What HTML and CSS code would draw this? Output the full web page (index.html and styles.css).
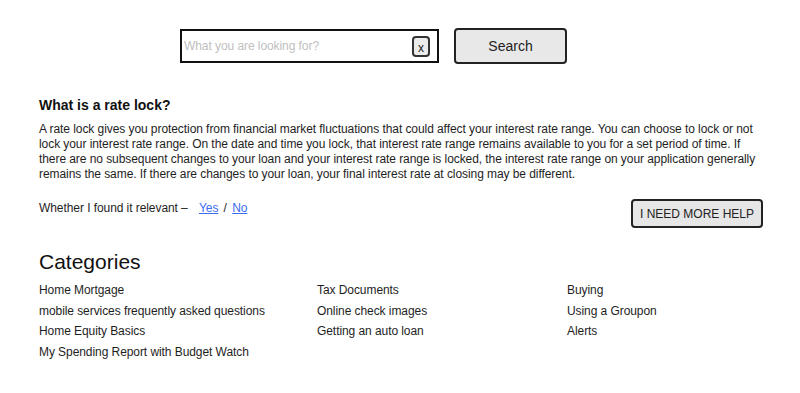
FILE: index.html
```html
<!DOCTYPE html>
<html lang="en">
<head>
    <meta charset="UTF-8">
    <meta name="viewport" content="width=device-width, initial-scale=1.0">
    <title>Help - Rate lock</title>
    <link rel="stylesheet" href="styles.css">
</head>
<body>
    <div class="search-bar">
        <div class="search-box">
            <input type="text" class="search-input" placeholder="What you are looking for?">
            <button class="clear-btn">x</button>
        </div>
        <button class="search-btn">Search</button>
    </div>

    <div class="article">
        <h2 class="article-title">What is a rate lock?</h2>
        <p class="article-text">A rate lock gives you protection from financial market fluctuations that could affect your interest rate range. You can choose to lock or not lock your interest rate range. On the date and time you lock, that interest rate range remains available to you for a set period of time. If there are no subsequent changes to your loan and your interest rate range is locked, the interest rate range on your application generally remains the same. If there are changes to your loan, your final interest rate at closing may be different.</p>

        <div class="feedback-row">
            <div class="feedback">
                Whether I found it relevant &ndash;
                <a href="#" class="feedback-link">Yes</a> / <a href="#" class="feedback-link">No</a>
            </div>
            <button class="help-btn">I NEED MORE HELP</button>
        </div>
    </div>

    <div class="categories">
        <h2 class="categories-title">Categories</h2>
        <ul class="category-list">
            <li>Home Mortgage</li>
            <li>Tax Documents</li>
            <li>Buying</li>
            <li>mobile services frequently asked questions</li>
            <li>Online check images</li>
            <li>Using a Groupon</li>
            <li>Home Equity Basics</li>
            <li>Getting an auto loan</li>
            <li>Alerts</li>
            <li>My Spending Report with Budget Watch</li>
        </ul>
    </div>
</body>
</html>
```

FILE: styles.css
```css
body {
    font-family: 'Liberation Sans', Arial, sans-serif;
    margin: 0;
    padding: 0 36px 0 39px;
    color: #1e1e1e;
    background: #fff;
    font-size: 12px;
    letter-spacing: -0.07px;
}

/* Search */
.search-bar {
    display: flex;
    align-items: center;
    gap: 15px;
    padding: 28px 0 0 141px;
}
.search-box {
    display: flex;
    align-items: center;
    box-sizing: border-box;
    width: 259px;
    height: 34px;
    border: 2px solid #111;
    padding: 0 7px 0 2px;
}
.search-input {
    flex: 1;
    min-width: 0;
    border: none;
    outline: none;
    font-family: inherit;
    font-size: 12px;
    letter-spacing: -0.07px;
    padding: 0;
    color: #222;
}
.search-input::placeholder {
    color: #c0c0c0;
}
.clear-btn {
    box-sizing: border-box;
    width: 18px;
    height: 21px;
    padding: 0;
    border: 2px solid #333;
    border-radius: 4px;
    background: #ececec;
    font-family: inherit;
    font-size: 12px;
    line-height: 17px;
    padding-top: 2px;
    color: #222;
}
.search-btn {
    box-sizing: border-box;
    width: 113px;
    height: 36px;
    border: 2px solid #222;
    border-radius: 4px;
    background: #e8e8e8;
    font-family: inherit;
    font-size: 14px;
    color: #222;
}

/* Article */
.article-title {
    font-size: 14px;
    font-weight: bold;
    margin: 33px 0 0;
    color: #111;
    letter-spacing: 0;
}
.article-text {
    margin: 9px 0 0;
    line-height: 15px;
}
.feedback-row {
    display: flex;
    justify-content: space-between;
    align-items: flex-start;
    margin-top: 17px;
}
.feedback {
    line-height: 15px;
    padding-top: 2px;
}
.feedback-link {
    color: #3c6cf0;
    margin: 0 2px;
}
.feedback-link:first-child {
    margin-left: 8px;
}
.help-btn {
    box-sizing: border-box;
    width: 132px;
    height: 29px;
    margin-right: 1px;
    border: 2px solid #222;
    border-radius: 4px;
    background: #e6e6e6;
    font-family: inherit;
    font-size: 12px;
    color: #222;
}

/* Categories */
.categories-title {
    font-size: 21px;
    font-weight: normal;
    margin: 22px 0 0;
    color: #111;
    letter-spacing: 0;
}
.category-list {
    list-style-type: none;
    padding: 0;
    margin: 6px 0 0;
    display: grid;
    grid-template-columns: 278px 250px 1fr;
    grid-auto-rows: 20.7px;
}
.category-list li {
    line-height: 20px;
}
```
